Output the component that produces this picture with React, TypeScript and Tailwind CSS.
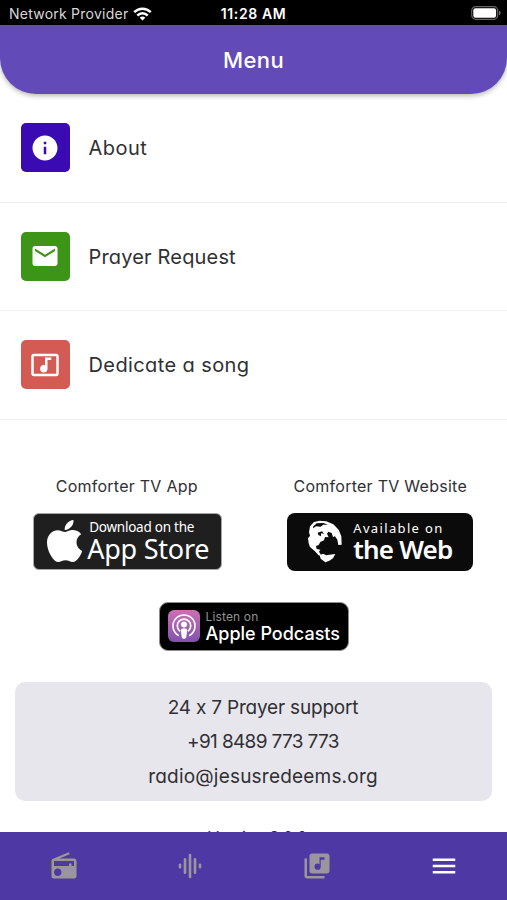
import { MdEmail, MdInfo, MdLibraryMusic, MdMenu, MdMusicVideo, MdRadio } from "react-icons/md";
import { FaApple } from "react-icons/fa";

const menuItems = [
  { label: "About", icon: MdInfo, color: "bg-[#3a0bb2]", spacing: "tracking-[0.5px]" },
  { label: "Prayer Request", icon: MdEmail, color: "bg-[#3c9517]", spacing: "tracking-[0.17px]" },
  { label: "Dedicate a song", icon: MdMusicVideo, color: "bg-[#d45b53]", spacing: "tracking-[0.4px]" },
];

function WifiIcon() {
  return (
    <svg viewBox="0 0 19 14" className="h-[14px] w-[19px]" fill="none" stroke="white" strokeWidth="2.5">
      <path d="M1.2 5.2C6 .5 13 .5 17.8 5.2" />
      <path d="M4.3 8.5c3.2-3 7.2-3 10.4 0" />
      <path d="M6.7 10.7c1.7-1.5 3.9-1.5 5.6 0l-2.8 2.8z" fill="white" stroke="none" />
    </svg>
  );
}

function BatteryIcon() {
  return (
    <svg viewBox="0 0 30 14" className="h-[14px] w-[30px]">
      <rect x=".7" y=".7" width="26" height="12.6" rx="4" fill="none" stroke="#656565" strokeWidth="1.2" />
      <rect x="2.3" y="2.3" width="22.8" height="9.4" rx="2.2" fill="white" />
      <path d="M28 4.6q1.8 1 1.8 2.4T28 9.4z" fill="#656565" />
    </svg>
  );
}

function GlobeIcon() {
  return (
    <svg viewBox="24 21 108 132" className="h-[44px] w-[36px]" fill="white">
      <path d="M33 40 45 27 62 23 82 25 103 34 119 50 127 70 128 95 118 96 115 80 108 70 102 72 98 60 88 56 84 62 89 73 78 72 75 82 64 87 59 96 51 99 53 108 64 110 60 116 66 125 60 128 47 114 33 102 29 91 27 76 33 68 30 58z" />
      <path d="M62 127 72 122 82 127 91 125 109 123 102 136 91 143 79 148 71 142 65 137z" />
      <path d="m42 41 11-10 20-1 14 5-14 0-8 6-14-1-8 6zM56 59l13-4 6 7-9-1 0 9-8-4z" fill="#0b0b0b" />
    </svg>
  );
}

function PodcastIcon() {
  return (
    <svg viewBox="0 0 32 32" className="h-8 w-8" fill="none">
      <defs>
        <linearGradient id="podcast" x1="0" y1="0" x2="0" y2="1">
          <stop stopColor="#cd70b3" />
          <stop offset="1" stopColor="#8053ae" />
        </linearGradient>
      </defs>
      <rect width="32" height="32" rx="6" fill="url(#podcast)" />
      <path d="M10.2 25.3a11 11 0 1 1 11.6 0" stroke="white" strokeWidth="1.6" strokeLinecap="round" />
      <path d="M11.6 20.8a6.7 6.7 0 1 1 8.8 0" stroke="white" strokeWidth="1.7" strokeLinecap="round" />
      <circle cx="16" cy="14.6" r="3" fill="white" />
      <path d="M12.9 20.5c0-3 6.2-3 6.2 0l-.8 6.5c-.4 2.4-4.2 2.4-4.6 0z" fill="white" />
    </svg>
  );
}

function WaveIcon() {
  return (
    <svg viewBox="0 0 24 26" className="h-[26px] w-[24px]" stroke="#9b969e" strokeWidth="2.6" strokeLinecap="round">
      <path d="M2 11.8v2.4M7 6.3v13.4M12 2v22M17 6.3v13.4M22 11.8v2.4" />
    </svg>
  );
}

export default function App() {
  return (
    <div className="flex h-[900px] w-[507px] flex-col overflow-hidden bg-white font-['Inter',sans-serif] text-[#303033]">
      <div className="grid h-[25px] shrink-0 grid-cols-[1fr_auto_1fr] items-center bg-black text-[14px] text-white">
        <div className="flex items-center gap-[5px] pl-[9px] pt-[2px]">
          <span className="whitespace-nowrap leading-5 tracking-[0.24px] text-[#d8d8d8]">Network Provider</span>
          <WifiIcon />
        </div>
        <span className="pt-[2px] font-semibold leading-5 tracking-[0.6px]">11:28 AM</span>
        <div className="flex justify-end pr-[6px] pt-[1px]">
          <BatteryIcon />
        </div>
      </div>

      <header className="flex h-[69px] shrink-0 items-center justify-center rounded-b-[36px] bg-[#624ab8] shadow-[0_2px_5px_rgba(0,0,0,0.28)]">
        <h1 className="text-[22px] font-medium leading-8 tracking-[0.4px] text-white">Menu</h1>
      </header>

      <main className="flex min-h-0 flex-1 flex-col overflow-hidden [font-feature-settings:'cv11','calt'_0]">
        {menuItems.map(({ label, icon: Icon, color, spacing }) => (
          <div key={label} className="flex h-[108.6px] shrink-0 items-center gap-[19px] border-b border-[#f2f2f2] pl-[20.5px]">
            <div className={`flex h-[49px] w-[49px] items-center justify-center rounded-[5px] ${color}`}>
              <Icon className="h-[30px] w-[30px] text-white" />
            </div>
            <span className={`pt-px text-[20px] leading-7 ${spacing}`}>{label}</span>
          </div>
        ))}

        <div className="mt-[55px] grid shrink-0 grid-cols-2">
          <div className="flex flex-col items-center">
            <p className="text-[16px] leading-[22px] tracking-[0.25px]">Comforter TV App</p>
            <div className="ml-[2px] mt-[16px] flex h-[57px] w-[189px] items-center rounded-[6px] border border-[#a7a7a7] bg-[#1f1f1f] pl-[13px] font-['Noto_Sans',sans-serif] text-white">
              <FaApple className="h-[42px] w-[35px] shrink-0" preserveAspectRatio="none" viewBox="4 32 373 448" />
              <div className="ml-[5px] whitespace-nowrap pb-[3px]">
                <p className="pl-[2px] text-[13.5px] leading-[18px] tracking-[-0.25px]">Download on the</p>
                <p className="text-[27px] leading-[25px] tracking-[-0.25px]">App Store</p>
              </div>
            </div>
          </div>
          <div className="flex flex-col items-center">
            <p className="text-[16px] leading-[22px] tracking-[0.27px]">Comforter TV Website</p>
            <div className="mt-[16px] flex h-[58px] w-[186px] items-center rounded-[8px] bg-[#0b0b0b] pl-[20px] font-['Noto_Sans',sans-serif] text-white">
              <GlobeIcon />
              <div className="ml-[10px] whitespace-nowrap pb-[3px]">
                <p className="text-[13px] leading-[18px] tracking-[1.35px]">Available on</p>
                <p className="text-[26px] font-semibold leading-[25px] tracking-[-0.8px]">the Web</p>
              </div>
            </div>
          </div>
        </div>

        <div className="mx-auto mt-[31px] flex h-[49px] w-[190px] shrink-0 items-center rounded-[9px] border border-[#8b8b8b] bg-black pl-[8px] text-white [font-feature-settings:normal]">
          <PodcastIcon />
          <div className="ml-[6px] whitespace-nowrap">
            <p className="text-[12px] leading-[15px] tracking-[0.15px] text-[#929292]">Listen on</p>
            <p className="text-[18px] font-medium leading-[20px]">Apple Podcasts</p>
          </div>
        </div>

        <div className="ml-[15px] mt-[31px] flex h-[119px] w-[477px] shrink-0 flex-col items-center rounded-[10px] bg-[#e8e6ed] pl-[19px] pt-[9px] text-[19px] leading-[34.4px]">
          <p className="tracking-[-0.2px]">24 x 7 Prayer support</p>
          <p className="tracking-[-0.65px]">+91 8489 773 773</p>
          <p className="tracking-[0.2px]">radio@jesusredeems.org</p>
        </div>
        <p className="ml-[8px] mt-[24px] shrink-0 text-center text-[16px] leading-[24px]">Version 3.0.0</p>
      </main>

      <nav className="grid h-[68px] shrink-0 grid-cols-4 items-center justify-items-center bg-[#4e38a3] text-[#9b969e]">
        <MdRadio className="ml-px h-[30px] w-[30px]" />
        <WaveIcon />
        <MdLibraryMusic className="h-[30px] w-[30px]" />
        <MdMenu className="h-[30px] w-[30px] text-white" />
      </nav>
    </div>
  );
}
